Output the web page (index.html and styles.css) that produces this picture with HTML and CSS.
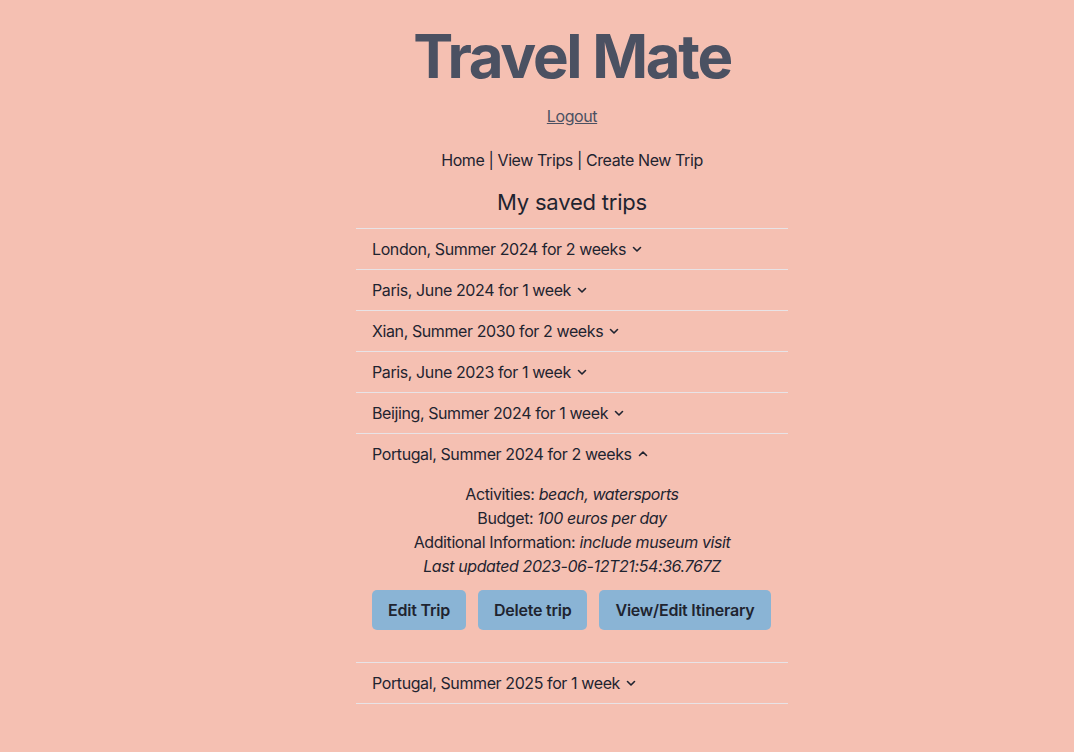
FILE: index.html
```html
<!DOCTYPE html>
<html>
<head>
<meta charset="utf-8">
<link rel="stylesheet" href="styles.css">
</head>
<body>
<div class="page">
  <h1 class="title">Travel Mate</h1>
  <a class="logout" href="#">Logout</a>
  <nav class="nav">Home | View Trips | Create New Trip</nav>
  <h2 class="heading">My saved trips</h2>
  <ul class="trips">
    <li class="trip"><div class="trip-head">London, Summer 2024 for 2 weeks <svg class="chev" viewBox="0 0 12 12"><path d="M2.5 4.5 L6 8 L9.5 4.5"/></svg></div></li>
    <li class="trip"><div class="trip-head">Paris, June 2024 for 1 week <svg class="chev" viewBox="0 0 12 12"><path d="M2.5 4.5 L6 8 L9.5 4.5"/></svg></div></li>
    <li class="trip"><div class="trip-head">Xian, Summer 2030 for 2 weeks <svg class="chev" viewBox="0 0 12 12"><path d="M2.5 4.5 L6 8 L9.5 4.5"/></svg></div></li>
    <li class="trip"><div class="trip-head">Paris, June 2023 for 1 week <svg class="chev" viewBox="0 0 12 12"><path d="M2.5 4.5 L6 8 L9.5 4.5"/></svg></div></li>
    <li class="trip"><div class="trip-head">Beijing, Summer 2024 for 1 week <svg class="chev" viewBox="0 0 12 12"><path d="M2.5 4.5 L6 8 L9.5 4.5"/></svg></div></li>
    <li class="trip open">
      <div class="trip-head">Portugal, Summer 2024 for 2 weeks <svg class="chev" viewBox="0 0 12 12"><path d="M2.5 7.5 L6 4 L9.5 7.5"/></svg></div>
      <div class="details">
        <p>Activities: <em>beach, watersports</em></p>
        <p>Budget: <em>100 euros per day</em></p>
        <p>Additional Information: <em>include museum visit</em></p>
        <p><em>Last updated 2023-06-12T21:54:36.767Z</em></p>
      </div>
      <div class="actions">
        <button class="btn">Edit Trip</button>
        <button class="btn">Delete trip</button>
        <button class="btn">View/Edit Itinerary</button>
      </div>
    </li>
    <li class="trip"><div class="trip-head">Portugal, Summer 2025 for 1 week <svg class="chev" viewBox="0 0 12 12"><path d="M2.5 4.5 L6 8 L9.5 4.5"/></svg></div></li>
  </ul>
</div>
</body>
</html>
```

FILE: styles.css
```css
* { box-sizing: border-box; }
html, body {
  margin: 0;
  padding: 0;
  background: #f5c0b2;
}
body {
  font-family: Inter, "Noto Sans", sans-serif;
  color: #1f2430;
  font-size: 16px;
  line-height: 24px;
  letter-spacing: -0.4px;
}
.page {
  display: flex;
  flex-direction: column;
  align-items: center;
  padding-top: 24px;
  padding-left: 70px;
}
.title {
  margin: 0;
  font-size: 60px;
  line-height: 64px;
  font-weight: 700;
  letter-spacing: -2.3px;
  color: #4b5162;
}
.logout {
  margin-top: 16px;
  color: #4b5162;
  text-decoration: underline;
}
.nav {
  margin-top: 20px;
}
.heading {
  margin: 16px 0 0;
  font-size: 22px;
  line-height: 28px;
  font-weight: 400;
  letter-spacing: -0.2px;
}
.trips {
  list-style: none;
  margin: 12px 0 0;
  padding: 0;
  width: 432px;
  border-top: 1px solid #e8e3e6;
}
.trip {
  border-bottom: 1px solid #e8e3e6;
}
.trip-head {
  display: flex;
  align-items: center;
  gap: 5px;
  padding: 8px 16px;
}
.chev {
  width: 12px;
  height: 12px;
  fill: none;
  stroke: #1f2430;
  stroke-width: 1.6;
  stroke-linecap: round;
  stroke-linejoin: round;
}
.details {
  text-align: center;
  padding-top: 8px;
}
.details p { margin: 0; }
.actions {
  display: flex;
  gap: 12px;
  padding: 12px 16px 32px;
}
.btn {
  font-family: inherit;
  font-size: 16px;
  line-height: 24px;
  font-weight: 600;
  letter-spacing: -0.22px;
  color: #1f2430;
  background: #8ab4d5;
  border: none;
  border-radius: 5px;
  padding: 8px 16px;
  white-space: nowrap;
  flex-shrink: 0;
}
```
